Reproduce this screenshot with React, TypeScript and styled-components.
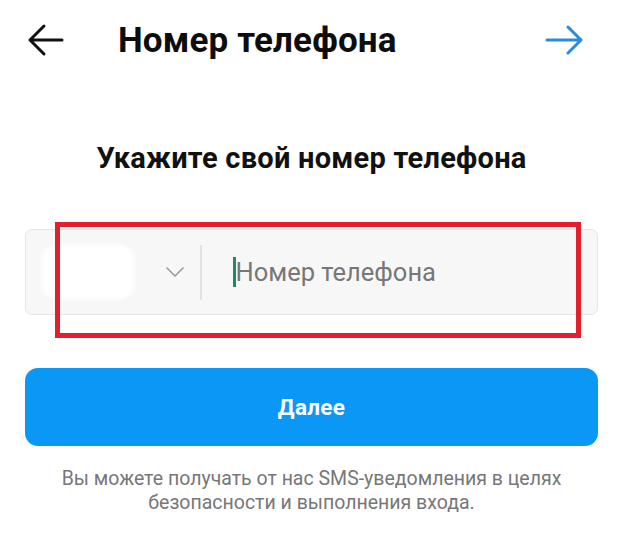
import React from "react";
import styled, { createGlobalStyle } from "styled-components";

const Global = createGlobalStyle`
  html, body { margin: 0; padding: 0; background: #ffffff; }
  body { font-family: Roboto, "Noto Sans", "Liberation Sans", sans-serif; }
`;

const Page = styled.div`
  width: 624px;
  height: 555px;
  box-sizing: border-box;
  padding: 0 26px 0 25px;
  display: flex;
  flex-direction: column;
  background: #fff;
  overflow: hidden;
`;

const Header = styled.header`
  height: 80px;
  display: flex;
  align-items: center;
`;

const IconButton = styled.button<{ $color: string; $shift?: number }>`
  border: 0;
  background: none;
  padding: 0;
  width: 40px;
  height: 40px;
  margin-right: ${(p) => p.$shift ?? 0}px;
  display: flex;
  align-items: center;
  justify-content: center;
  color: ${(p) => p.$color};
`;

const Title = styled.h1`
  margin: 0 0 0 53px;
  flex: 1;
  font-size: 35px;
  font-weight: 700;
  color: #0d0d0d;
  letter-spacing: 0.15px;
`;

const Heading = styled.h2`
  margin: 61px 0 0;
  text-align: center;
  font-size: 29px;
  line-height: 34px;
  font-weight: 700;
  color: #111;
  letter-spacing: 0.25px;
`;

const FieldWrap = styled.div`
  position: relative;
  margin-top: 54px;
`;

const Field = styled.div`
  height: 86px;
  box-sizing: border-box;
  border: 1.5px solid #e6e6e6;
  border-radius: 7px;
  background: #f7f7f7;
  display: flex;
  align-items: center;
`;

const CountryPicker = styled.div`
  width: 174px;
  height: 100%;
  display: flex;
  align-items: center;
  padding-left: 16px;
  box-sizing: border-box;
`;

const Redacted = styled.div`
  width: 92px;
  height: 54px;
  background: #ffffff;
  border-radius: 14px;
  filter: blur(2px);
`;

const Chevron = styled.div`
  margin-left: 32px;
  display: flex;
  color: #9a9a9a;
`;

const Divider = styled.div`
  width: 1.5px;
  height: 55px;
  background: #e2e2e2;
`;

const PhoneInput = styled.div`
  display: flex;
  align-items: center;
  padding-left: 31px;
  font-size: 25.5px;
  color: #777;
`;

const Caret = styled.span`
  display: inline-block;
  width: 3px;
  height: 30px;
  background: #1b8a6b;
`;

const Highlight = styled.div`
  position: absolute;
  left: 30px;
  top: -7px;
  width: 526px;
  height: 116px;
  box-sizing: border-box;
  border: 5px solid #e21f2b;
  pointer-events: none;
`;

const Primary = styled.button`
  margin-top: 53px;
  height: 78px;
  border: 0;
  border-radius: 13px;
  background: #0a97f5;
  color: #fff;
  font-family: inherit;
  font-size: 22.5px;
  font-weight: 700;
  letter-spacing: 0.3px;
`;

const Note = styled.p`
  margin: 21px 20px 0;
  text-align: center;
  font-size: 19.5px;
  line-height: 24px;
  color: #777;
`;

export default function App() {
  return (
    <>
      <Global />
      <Page>
        <Header>
          <IconButton $color="#111">
            <svg width="38" height="36" viewBox="0 0 38 36" fill="none" stroke="currentColor" strokeWidth="3" strokeLinecap="round" strokeLinejoin="round">
              <path d="M36 18H4M18 4L4 18l14 14" />
            </svg>
          </IconButton>
          <Title>Номер телефона</Title>
          <IconButton $color="#2b8bdb" $shift={14}>
            <svg width="38" height="30" viewBox="0 0 38 30" fill="none" stroke="currentColor" strokeWidth="3" strokeLinecap="round" strokeLinejoin="round">
              <path d="M2 15h34M23 2l13 13-13 13" />
            </svg>
          </IconButton>
        </Header>
        <Heading>Укажите свой номер телефона</Heading>
        <FieldWrap>
          <Field>
            <CountryPicker>
              <Redacted />
              <Chevron>
                <svg width="18" height="10" viewBox="0 0 18 10" fill="none" stroke="currentColor" strokeWidth="1.6" strokeLinecap="round" strokeLinejoin="round">
                  <path d="M1 1l8 8 8-8" />
                </svg>
              </Chevron>
            </CountryPicker>
            <Divider />
            <PhoneInput>
              <Caret />
              Номер телефона
            </PhoneInput>
          </Field>
          <Highlight />
        </FieldWrap>
        <Primary>Далее</Primary>
        <Note>Вы можете получать от нас SMS-уведомления в целях безопасности и выполнения входа.</Note>
      </Page>
    </>
  );
}
